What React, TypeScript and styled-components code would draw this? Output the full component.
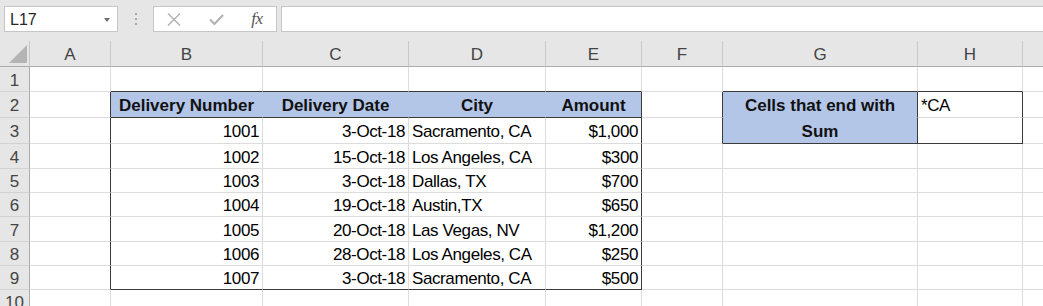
import React from 'react';
import styled, { createGlobalStyle } from 'styled-components';

const GlobalStyle = createGlobalStyle`
  html, body { margin: 0; padding: 0; background: #ffffff; }
  body { font-family: "Liberation Sans", Arial, sans-serif; }
`;

type Align = 'left' | 'right' | 'center';

const CHROME = '#e6e6e6';
const GRID = '#dcdcdc';
const DARK = '#3a3a3a';
const FILL = '#b4c6e7';

const COLS = ['A', 'B', 'C', 'D', 'E', 'F', 'G', 'H', 'I'];
const COL_WIDTHS = [81, 152, 146, 137, 96, 81, 195, 105, 60];
const ROW_HEIGHTS = [25, 26, 26, 25, 24, 24, 25, 24, 24, 24];

const deliveries = [
  ['1001', '3-Oct-18', 'Sacramento, CA', '$1,000'],
  ['1002', '15-Oct-18', 'Los Angeles, CA', '$300'],
  ['1003', '3-Oct-18', 'Dallas, TX', '$700'],
  ['1004', '19-Oct-18', 'Austin,TX', '$650'],
  ['1005', '20-Oct-18', 'Las Vegas, NV', '$1,200'],
  ['1006', '28-Oct-18', 'Los Angeles, CA', '$250'],
  ['1007', '3-Oct-18', 'Sacramento, CA', '$500'],
];

const Page = styled.div`
  width: 1043px;
  height: 306px;
  overflow: hidden;
  background: ${CHROME};
  display: flex;
  flex-direction: column;
`;

const FormulaBar = styled.div`
  display: flex;
  align-items: flex-start;
  box-sizing: border-box;
  height: 41px;
  padding: 6px 0 0 4px;
  flex-shrink: 0;
`;

const NameBox = styled.div`
  box-sizing: border-box;
  width: 114px;
  height: 26px;
  background: #fff;
  border: 1px solid #c6c6c6;
  display: flex;
  align-items: center;
  justify-content: space-between;
  padding: 1px 7px 0 5px;
  font-size: 16px;
  color: #262626;
`;

const DropArrow = styled.span`
  width: 0;
  height: 0;
  border-left: 3.5px solid transparent;
  border-right: 3.5px solid transparent;
  border-top: 4px solid #707070;
`;

const Grip = styled.div`
  width: 35px;
  height: 26px;
  display: flex;
  flex-direction: column;
  align-items: center;
  justify-content: center;
  gap: 3px;
`;

const GripDot = styled.span`
  width: 2px;
  height: 2px;
  background: #a8a8a8;
`;

const FuncBox = styled.div`
  box-sizing: border-box;
  width: 124px;
  height: 26px;
  background: #fff;
  border: 1px solid #c6c6c6;
  display: flex;
  align-items: center;
`;

const IconSlot = styled.div<{ $w: number }>`
  width: ${p => p.$w}px;
  height: 24px;
  display: flex;
  align-items: center;
  justify-content: center;
`;

const FxLabel = styled.span`
  font-family: "Liberation Serif", "Times New Roman", serif;
  font-style: italic;
  font-size: 17px;
  color: #555;
  letter-spacing: -0.5px;
`;

const FormulaInput = styled.div`
  box-sizing: border-box;
  flex: 1;
  margin-left: 4px;
  height: 26px;
  background: #fff;
  border: 1px solid #c6c6c6;
  border-right: none;
`;

const Sheet = styled.div`
  display: grid;
  grid-template-columns: 30px ${COL_WIDTHS.map(w => `${w}px`).join(' ')};
  grid-template-rows: 26px ${ROW_HEIGHTS.map(h => `${h}px`).join(' ')};
  background: #fff;
`;

const Corner = styled.div`
  box-sizing: border-box;
  background: ${CHROME};
  border-right: 1px solid #c8c8c8;
  border-bottom: 1px solid #ababab;
  display: flex;
  align-items: flex-end;
  justify-content: flex-end;
  padding: 0 2px 3px 0;
`;

const CornerTriangle = styled.span`
  width: 18px;
  height: 18px;
  background: #b4b4b4;
  clip-path: polygon(100% 0, 100% 100%, 0 100%);
`;

const ColHeader = styled.div`
  box-sizing: border-box;
  background: ${CHROME};
  border-right: 1px solid #c8c8c8;
  border-bottom: 1px solid #ababab;
  display: flex;
  align-items: center;
  justify-content: center;
  padding-top: 3px;
  font-size: 17px;
  color: #444;
`;

const RowHeader = styled.div`
  box-sizing: border-box;
  background: ${CHROME};
  border-right: 1px solid #ababab;
  border-bottom: 1px solid #d2d2d2;
  display: flex;
  align-items: center;
  justify-content: center;
  padding-top: 3px;
  font-size: 17px;
  color: #444;
`;

const Cell = styled.div<{ $bg: string; $right: string; $bottom: string; $align: Align; $bold: boolean }>`
  box-sizing: border-box;
  background: ${p => p.$bg};
  border-right: 1px solid ${p => p.$right};
  border-bottom: 1px solid ${p => p.$bottom};
  display: flex;
  align-items: center;
  justify-content: ${p => (p.$align === 'left' ? 'flex-start' : p.$align === 'right' ? 'flex-end' : 'center')};
  padding: 3px 3px 0 3px;
  font-size: 17px;
  font-weight: ${p => (p.$bold ? 700 : 400)};
  letter-spacing: ${p => (p.$bold ? '0' : '-0.4px')};
  color: ${p => (p.$bold ? '#111' : '#000')};
  white-space: nowrap;
  min-width: 0;
`;

type CellDef = { text?: string; align: Align; bold: boolean };

function content(r: number, c: number): CellDef {
  if (r === 1) {
    const heads = ['Delivery Number', 'Delivery Date', 'City', 'Amount'];
    if (c >= 1 && c <= 4) return { text: heads[c - 1], align: 'center', bold: true };
    if (c === 6) return { text: 'Cells that end with', align: 'center', bold: true };
    if (c === 7) return { text: '*CA', align: 'left', bold: false };
  }
  if (r === 2 && c === 6) return { text: 'Sum', align: 'center', bold: true };
  if (r >= 2 && r <= 8 && c >= 1 && c <= 4) {
    const row = deliveries[r - 2];
    return { text: row[c - 1], align: c === 3 ? 'left' : 'right', bold: false };
  }
  return { align: 'left', bold: false };
}

const filled = (r: number, c: number) =>
  (r === 1 && c >= 1 && c <= 4) || (c === 6 && (r === 1 || r === 2));

function rightColor(r: number, c: number) {
  const inTable = r >= 1 && r <= 8;
  const inBox = r === 1 || r === 2;
  if (inTable && (c === 0 || c === 4)) return DARK;
  if (inBox && (c === 5 || c === 6 || c === 7)) return DARK;
  if (filled(r, c) && filled(r, c + 1)) return FILL;
  return GRID;
}

function bottomColor(r: number, c: number) {
  const tableCol = c >= 1 && c <= 4;
  const boxCol = c === 6 || c === 7;
  if (tableCol && (r === 0 || r === 1 || r === 8)) return DARK;
  if (boxCol && (r === 0 || r === 2)) return DARK;
  if (filled(r, c) && filled(r + 1, c)) return FILL;
  return GRID;
}

export default function App() {
  return (
    <>
      <GlobalStyle />
      <Page>
        <FormulaBar>
          <NameBox>
            <span>L17</span>
            <DropArrow />
          </NameBox>
          <Grip>
            <GripDot />
            <GripDot />
            <GripDot />
          </Grip>
          <FuncBox>
            <IconSlot $w={40}>
              <svg width="14" height="13" viewBox="0 0 14 13">
                <path d="M1 0.5 L13 12.5 M13 0.5 L1 12.5" stroke="#b0b0b0" strokeWidth="1.4" fill="none" />
              </svg>
            </IconSlot>
            <IconSlot $w={44}>
              <svg width="15" height="11" viewBox="0 0 15 11">
                <path d="M1 5.5 L5.5 10 L14 1" stroke="#b0b0b0" strokeWidth="2" fill="none" />
              </svg>
            </IconSlot>
            <IconSlot $w={38}>
              <FxLabel>fx</FxLabel>
            </IconSlot>
          </FuncBox>
          <FormulaInput />
        </FormulaBar>
        <Sheet>
          <Corner>
            <CornerTriangle />
          </Corner>
          {COLS.map(col => (
            <ColHeader key={col}>{col === 'I' ? '' : col}</ColHeader>
          ))}
          {ROW_HEIGHTS.map((_, r) => (
            <React.Fragment key={r}>
              <RowHeader>{r + 1}</RowHeader>
              {COLS.map((col, c) => {
                const def = content(r, c);
                return (
                  <Cell
                    key={col}
                    $bg={filled(r, c) ? FILL : '#fff'}
                    $right={rightColor(r, c)}
                    $bottom={bottomColor(r, c)}
                    $align={def.align}
                    $bold={def.bold}
                  >
                    {def.text}
                  </Cell>
                );
              })}
            </React.Fragment>
          ))}
        </Sheet>
      </Page>
    </>
  );
}
